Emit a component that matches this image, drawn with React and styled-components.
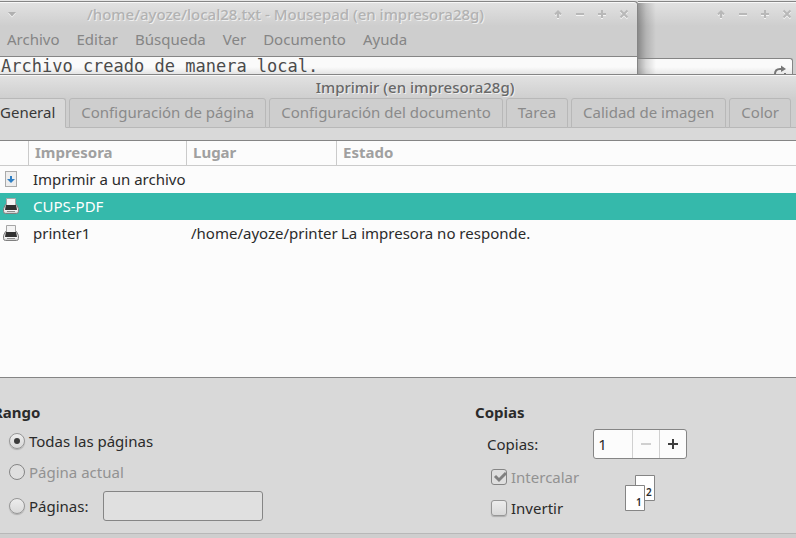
import React, { useState } from "react";
import styled, { createGlobalStyle, css } from "styled-components";

const GlobalStyle = createGlobalStyle`
  *, *::before, *::after { box-sizing: border-box; }
  body {
    margin: 0;
    overflow: hidden;
    background: #d0d0d0;
    color: #2b2b2b;
    font-family: "Noto Sans", "Liberation Sans", sans-serif;
    font-size: 15px;
    line-height: 20px;
  }
  button, input { font: inherit; color: inherit; margin: 0; }
`;

const windowFrame = css`
  border-top: 1px solid #858585;
  box-shadow: inset 0 1px 0 #f8f8f8;
  background: linear-gradient(#e2e2e2, #cecece 24px);
`;

const Desktop = styled.div`
  display: flex;
  flex-direction: column;
  min-height: 100vh;
  padding-top: 1px;
  overflow: hidden;
  background: #e6e6e6;
`;

const BackWindows = styled.div`
  display: grid;
  grid-template-columns: minmax(0, 1fr) 158px;
  background: #cecece;
`;

const EditorWindow = styled.section`
  ${windowFrame}
  border-right: 1px solid #858585;
  border-top-right-radius: 4px;
`;

const BrowserWindow = styled.section`
  ${windowFrame}
  background: linear-gradient(90deg, #0005, #0002 8px, #0000 18px),
    linear-gradient(#e2e2e2, #cecece 24px);
`;

const TitleBar = styled.header`
  display: flex;
  align-items: center;
  height: 25px;
  padding: 0 ${(p) => p.$end ?? 7}px 2px 7px;
  color: #b2b2b2;
  text-shadow: 1px 1px 0 #efefef;
`;

const WindowTitle = styled.h1`
  flex: 1;
  margin: 0;
  padding-left: ${(p) => p.$inset}px;
  font-size: 15px;
  line-height: 20px;
  font-weight: 500;
  text-align: ${(p) => (p.$center ? "center" : "left")};
  white-space: nowrap;
`;

const WindowButtons = styled.div`
  display: flex;
  gap: 10px;
  margin-left: auto;
`;

const WindowButton = styled.button`
  display: flex;
  width: 12px;
  height: 12px;
  padding: 0;
  border: 0;
  background: none;
  svg { display: block; filter: drop-shadow(0 1px 0 #f4f4f4); }
`;

const MenuBar = styled.nav`
  display: flex;
  gap: 17px;
  height: 29px;
  padding: 0 7px 6px;
`;

const MenuItem = styled.button`
  padding: 0;
  border: 0;
  background: none;
  color: #858585;
`;

const EditorText = styled.div`
  height: 18px;
  padding-left: 1px;
  border-top: 1px solid #858585;
  background: linear-gradient(#fafafa 10px, #e4e4e4);
  color: #4b4b4b;
  font-family: "DejaVu Sans Mono", monospace;
  font-size: 17px;
  line-height: 18px;
`;

const AddressBar = styled.div`
  display: flex;
  justify-content: flex-end;
  height: 16px;
  margin: 31px 3px 0 0;
  padding: 6px 5px 0 0;
  overflow: hidden;
  border: solid #858585;
  border-width: 1px 1px 0 0;
  border-top-right-radius: 3px;
  background: linear-gradient(90deg, #0005, #0002 8px, #0000 18px),
    linear-gradient(#fafafa 8px, #e8e8e8);
`;

const Dialog = styled.main`
  ${windowFrame}
  flex: 1;
  margin-left: -12px;
`;

const DialogTitleBar = styled(TitleBar)`
  height: 23px;
  padding: 0;
  color: #686868;
`;

const TabStrip = styled.div`
  display: flex;
  gap: 3px;
  height: 30px;
  border-bottom: 1px solid #b8b8b8;
`;

const Tab = styled.button`
  height: 30px;
  padding: 0 11px 2px;
  white-space: nowrap;
  border: 1px solid #b8b8b8;
  border-radius: 3px 3px 0 0;
  background: #cecece;
  color: #8a8a8a;
  &[aria-selected="true"] {
    padding-right: 10px;
    border-bottom-color: #d9d9d9;
    background: #d9d9d9;
    color: #383838;
  }
`;

const TabPage = styled.div`
  padding-top: 12px;
  border-bottom: 1px solid #b8b8b8;
  background: #d9d9d9;
`;

const PrinterList = styled.div`
  min-height: 238px;
  border: solid #858585;
  border-width: 1px 0;
  background: #fcfcfc;
`;

const PrinterTable = styled.table`
  width: 100%;
  table-layout: fixed;
  border-collapse: separate;
  border-spacing: 0;
`;

const Column = styled.col`
  width: ${(p) => p.$width};
`;

const HeadCell = styled.th`
  height: 25px;
  padding: 0 6px 2px;
  border: solid #cbcbcb;
  border-width: 0 1px 1px 0;
  color: #a0a0a0;
  font-weight: 700;
  text-align: left;
  &:last-child { border-right: 0; }
`;

const PrinterRow = styled.tr`
  ${(p) => p.$selected && css`
    background: #35b9ab;
    color: #fff;
  `}
`;

const Cell = styled.td`
  height: 27px;
  padding: 0 4px 2px;
  white-space: nowrap;
`;

const IconCell = styled(Cell)`
  padding-left: 15px;
  svg { display: block; }
`;

const Options = styled.div`
  display: grid;
  grid-template-columns: 487px minmax(0, 1fr);
  padding: 21px 0 9px;
`;

const Group = styled.fieldset`
  margin: 0;
  padding: 0 0 0 ${(p) => p.$inset}px;
  border: 0;
`;

const GroupTitle = styled.legend`
  height: 26px;
  padding: 3px 0;
  font-weight: 700;
`;

const OptionRow = styled.div`
  display: flex;
  align-items: center;
  gap: 4px;
  height: ${(p) => p.$height}px;
  padding-left: ${(p) => p.$inset}px;
`;

const CopiesRow = styled(OptionRow)`
  padding-top: 2px;
`;

const OptionLabel = styled.label`
  color: ${(p) => (p.$disabled ? "#929292" : "inherit")};
`;

const toggle = css`
  appearance: none;
  display: grid;
  place-items: center;
  width: 16px;
  height: 16px;
  border: 1px solid #969696;
  background: linear-gradient(#ededed, #d9d9d9);
  box-shadow: 0 1px 1px #0003;
  &:disabled { background: #dfdfdf; border-color: #858585; box-shadow: none; }
`;

const Radio = styled.input.attrs({ type: "radio" })`
  ${toggle}
  border-radius: 50%;
  &:checked::before {
    content: "";
    width: 6px;
    height: 6px;
    border-radius: 50%;
    background: #3b3b3b;
  }
`;

const CheckBox = styled.input.attrs({ type: "checkbox" })`
  ${toggle}
  grid-area: 1 / 1;
  border-radius: 3px;
`;

const CheckHolder = styled.span`
  display: grid;
  svg { grid-area: 1 / 1; pointer-events: none; z-index: 1; }
`;

const PagesInput = styled.input`
  width: 160px;
  height: 30px;
  margin-left: 11px;
  padding: 0 6px;
  border: 1px solid #858585;
  border-radius: 3px;
  background: #e0e0e0;
`;

const SpinBox = styled.div`
  display: flex;
  width: 94px;
  height: 30px;
  margin-left: 51px;
  overflow: hidden;
  border: 1px solid #858585;
  border-radius: 3px;
  background: #fcfcfc;
`;

const SpinInput = styled.input`
  flex: 1;
  min-width: 0;
  padding: 0 4px;
  border: 0;
  background: none;
  outline: 0;
`;

const SpinButton = styled.button`
  display: grid;
  place-items: center;
  width: 27px;
  padding: 0;
  border: 0;
  border-left: 1px solid #d0d0d0;
  background: none;
  color: #3e3e3e;
  &:disabled { color: #d0d0d0; }
`;

const CollateBlock = styled.div`
  display: flex;
  gap: 46px;
  align-items: center;
`;

const glyphs = {
  up: "M6 10V4M3 6.500L6 3.500L9 6.500",
  minimize: "M2 6H10",
  maximize: "M2 6H10M6 2V10",
  close: "M2.500 2.500L9.500 9.500M9.500 2.500L2.500 9.500",
};

const windowActions = [
  ["up", "Enrollar"],
  ["minimize", "Minimizar"],
  ["maximize", "Maximizar"],
  ["close", "Cerrar"],
];

function WindowControls() {
  return (
    <WindowButtons>
      {windowActions.map(([kind, label]) => (
        <WindowButton key={kind} aria-label={label}>
          <svg width="12" height="12" viewBox="0 0 12 12" fill="none" stroke="#b8b8b8" strokeWidth="2">
            <path d={glyphs[kind]} />
          </svg>
        </WindowButton>
      ))}
    </WindowButtons>
  );
}

function FileIcon() {
  return (
    <svg width="16" height="16" viewBox="0 0 16 16" aria-hidden="true">
      <rect x="2.500" y=".5" width="11" height="15" fill="#eee" stroke="#aaa" />
      <path d="M7 5h2v3h3l-4 4-4-4h3z" fill="#2f7fc4" />
    </svg>
  );
}

function PrinterIcon() {
  return (
    <svg width="16" height="16" viewBox="0 0 16 16" aria-hidden="true">
      <path d="M2.500 6.500h11l2 4v3q0 2-2 2h-11q-2 0-2-2v-3z" fill="#d6d6d6" stroke="#808080" />
      <path d="M1.500 11h13v2.500H1.500z" fill="#f6f6f6" />
      <path d="M3.500.5h9v7h-9z" fill="#f4f4f4" stroke="#a6a6a6" />
      <path d="M3 7h10l1 5H2z" fill="#303030" />
      <path d="M4 13h8v1H4z" fill="#8c8c8c" />
    </svg>
  );
}

function CollateIcon() {
  return (
    <svg width="30" height="38" viewBox="0 -2 30 38" role="img" aria-label="Orden de las copias">
      <g fill="#fff" stroke="#858585">
        <path d="M10.500.5h19v25h-19z" />
        <path d="M.5 10.500h19v25H.5z" />
      </g>
      <g fill="#2b2b2b" fontSize="10" fontWeight="600" fontFamily="Noto Sans, sans-serif">
        <text x="21" y="21">2</text>
        <text x="11" y="31">1</text>
      </g>
    </svg>
  );
}

const menus = ["Archivo", "Editar", "Búsqueda", "Ver", "Documento", "Ayuda"];
const tabs = [
  "General",
  "Configuración de página",
  "Configuración del documento",
  "Tarea",
  "Calidad de imagen",
  "Color",
];
const printers = [
  { name: "Imprimir a un archivo", place: "", state: "", file: true },
  { name: "CUPS-PDF", place: "", state: "" },
  { name: "printer1", place: "/home/ayoze/printer", state: "La impresora no responde." },
];
const ranges = [
  { id: "all", label: "Todas las páginas", height: 31 },
  { id: "current", label: "Página actual", height: 31, disabled: true },
  { id: "pages", label: "Páginas:", height: 37 },
];

export default function App() {
  const [tab, setTab] = useState(tabs[0]);
  const [printer, setPrinter] = useState("CUPS-PDF");
  const [range, setRange] = useState("all");
  const [copies, setCopies] = useState(1);
  const [reverse, setReverse] = useState(false);

  return (
    <>
      <GlobalStyle />
      <Desktop>
        <BackWindows>
          <EditorWindow>
            <TitleBar>
              <WindowButton aria-label="Menú de la ventana">
                <svg width="12" height="12" viewBox="0 0 12 12">
                  <path d="M1 4h8L5 8.500z" fill="#b0b0b0" />
                </svg>
              </WindowButton>
              <WindowTitle $inset={68}>/home/ayoze/local28.txt - Mousepad (en impresora28g)</WindowTitle>
              <WindowControls />
            </TitleBar>
            <MenuBar>
              {menus.map((name) => <MenuItem key={name}>{name}</MenuItem>)}
            </MenuBar>
            <EditorText>Archivo creado de manera local.</EditorText>
          </EditorWindow>
          <BrowserWindow>
            <TitleBar as="div" $end={3}><WindowControls /></TitleBar>
            <AddressBar>
              <svg width="14" height="14" viewBox="0 0 14 14" fill="none" stroke="#777" strokeWidth="2">
                <path d="M2 13V9q0-5 5-5h3" />
                <path d="M8 .5L13 4L8 7z" fill="#777" stroke="none" />
                <path d="M12 8v4" />
              </svg>
            </AddressBar>
          </BrowserWindow>
        </BackWindows>

        <Dialog>
          <DialogTitleBar>
            <WindowTitle $inset={46} $center>Imprimir (en impresora28g)</WindowTitle>
          </DialogTitleBar>
          <TabStrip role="tablist">
            {tabs.map((name) => (
              <Tab key={name} role="tab" aria-selected={tab === name} onClick={() => setTab(name)}>
                {name}
              </Tab>
            ))}
          </TabStrip>
          <TabPage>
            <PrinterList>
              <PrinterTable>
                <colgroup>
                  <Column $width="41px" />
                  <Column $width="158px" />
                  <Column $width="150px" />
                  <Column $width="auto" />
                </colgroup>
                <thead>
                  <tr>
                    <HeadCell />
                    <HeadCell>Impresora</HeadCell>
                    <HeadCell>Lugar</HeadCell>
                    <HeadCell>Estado</HeadCell>
                  </tr>
                </thead>
                <tbody>
                  {printers.map((p) => (
                    <PrinterRow key={p.name} $selected={p.name === printer} onClick={() => setPrinter(p.name)}>
                      <IconCell>{p.file ? <FileIcon /> : <PrinterIcon />}</IconCell>
                      <Cell>{p.name}</Cell>
                      <Cell>{p.place}</Cell>
                      <Cell>{p.state}</Cell>
                    </PrinterRow>
                  ))}
                </tbody>
              </PrinterTable>
            </PrinterList>
            <Options>
              <Group $inset={5}>
                <GroupTitle>Rango</GroupTitle>
                {ranges.map((r) => (
                  <OptionRow key={r.id} $height={r.height} $inset={16}>
                    <Radio
                      id={r.id}
                      name="range"
                      disabled={r.disabled}
                      checked={range === r.id}
                      onChange={() => setRange(r.id)}
                    />
                    <OptionLabel htmlFor={r.id} $disabled={r.disabled}>{r.label}</OptionLabel>
                    {r.id === "pages" && <PagesInput aria-label="Intervalo de páginas" />}
                  </OptionRow>
                ))}
              </Group>
              <Group $inset={0}>
                <GroupTitle>Copias</GroupTitle>
                <CopiesRow $height={36} $inset={12}>
                  <OptionLabel htmlFor="copies">Copias:</OptionLabel>
                  <SpinBox>
                    <SpinInput
                      id="copies"
                      value={copies}
                      onChange={(e) => setCopies(Number(e.target.value) || 1)}
                    />
                    <SpinButton aria-label="Menos" disabled={copies <= 1} onClick={() => setCopies(copies - 1)}>
                      <svg width="10" height="10" viewBox="0 0 10 10"><path d="M0 4h10v2H0z" fill="currentColor" /></svg>
                    </SpinButton>
                    <SpinButton aria-label="Más" onClick={() => setCopies(copies + 1)}>
                      <svg width="10" height="10" viewBox="0 0 10 10"><path d="M0 4h4V0h2v4h4v2H6v4H4V6H0z" fill="currentColor" /></svg>
                    </SpinButton>
                  </SpinBox>
                </CopiesRow>
                <CollateBlock>
                  <div>
                    <OptionRow $height={31} $inset={16}>
                      <CheckHolder>
                        <CheckBox id="collate" disabled checked readOnly />
                        <svg width="16" height="16" viewBox="0 0 16 16" fill="none" stroke="#808080" strokeWidth="3">
                          <path d="M4 7l4 4 7-7" />
                        </svg>
                      </CheckHolder>
                      <OptionLabel htmlFor="collate" $disabled>Intercalar</OptionLabel>
                    </OptionRow>
                    <OptionRow $height={31} $inset={16}>
                      <CheckBox id="reverse" checked={reverse} onChange={() => setReverse(!reverse)} />
                      <OptionLabel htmlFor="reverse">Invertir</OptionLabel>
                    </OptionRow>
                  </div>
                  <CollateIcon />
                </CollateBlock>
              </Group>
            </Options>
          </TabPage>
        </Dialog>
      </Desktop>
    </>
  );
}
